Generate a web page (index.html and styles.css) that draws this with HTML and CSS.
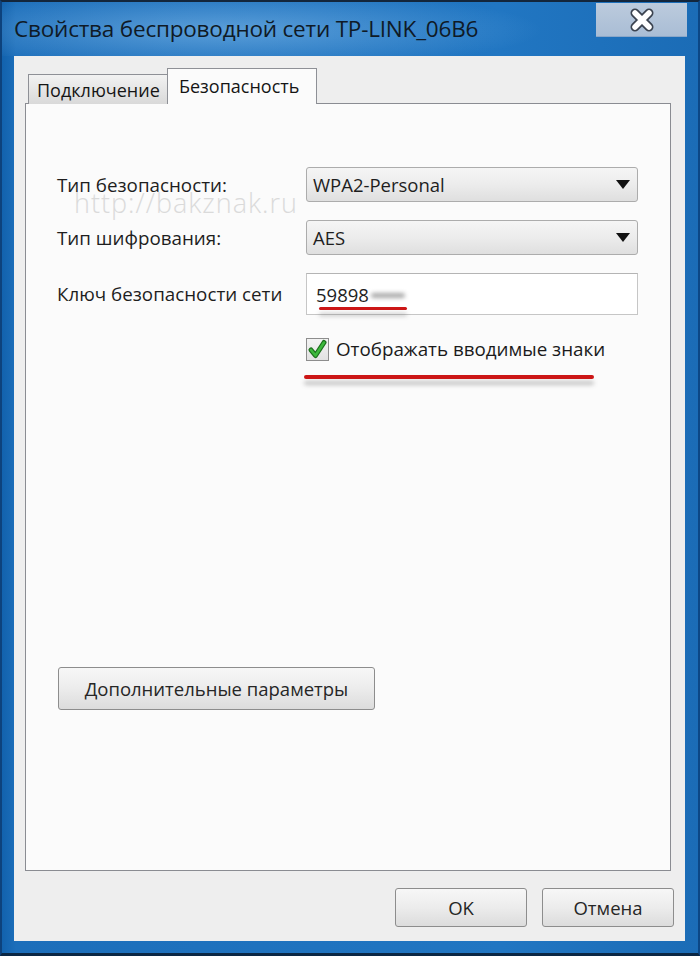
FILE: index.html
```html
<!DOCTYPE html>
<html lang="ru">
<head>
<meta charset="utf-8">
<title>Свойства беспроводной сети TP-LINK_06B6</title>
<link rel="stylesheet" href="styles.css">
</head>
<body>
<div class="window">
  <div class="titlebar">
    <div class="title">Свойства беспроводной сети TP-LINK_06B6</div>
    <div class="close">
      <svg width="28" height="26" viewBox="0 0 28 26">
        <path d="M7 6 L21 20 M21 6 L7 20" stroke="#3b4350" stroke-width="9" stroke-linecap="round" fill="none"/>
        <path d="M7 6 L21 20 M21 6 L7 20" stroke="#ffffff" stroke-width="5.5" stroke-linecap="round" fill="none"/>
      </svg>
    </div>
  </div>
  <div class="client">
    <div class="tabs">
      <div class="tab">Подключение</div>
      <div class="tab active">Безопасность</div>
    </div>
    <div class="panel">
      <div class="watermark">http://bakznak.ru</div>
      <div class="form">
        <div class="row">
          <span class="label">Тип безопасности:</span>
          <div class="select"><span>WPA2-Personal</span><span class="arrow"></span></div>
        </div>
        <div class="row">
          <span class="label">Тип шифрования:</span>
          <div class="select"><span>AES</span><span class="arrow"></span></div>
        </div>
        <div class="row row-key">
          <span class="label">Ключ безопасности сети</span>
          <div class="input"><span>59898</span><span class="smudge"></span><span class="mark mark-key"></span></div>
        </div>
        <div class="row row-check">
          <span class="label"></span>
          <div class="check">
            <span class="box">
              <svg width="21" height="21" viewBox="0 0 21 21">
                <path d="M4 11 L8.5 16.5 L17 3.5" stroke="#1b6e1b" stroke-width="5" stroke-linecap="round" stroke-linejoin="round" fill="none"/>
                <path d="M4 11 L8.5 16.5 L17 3.5" stroke="#3cb83c" stroke-width="2.6" stroke-linecap="round" stroke-linejoin="round" fill="none"/>
              </svg>
            </span>
            <span class="check-label">Отображать вводимые знаки</span>
            <span class="mark mark-check"></span>
          </div>
        </div>
      </div>
      <button class="btn adv">Дополнительные параметры</button>
    </div>
    <div class="footer">
      <button class="btn ok">OK</button>
      <button class="btn cancel">Отмена</button>
    </div>
  </div>
</div>
</body>
</html>
```
FILE: styles.css
```css
* { box-sizing: border-box; }
html, body { margin: 0; padding: 0; }
body {
  width: 700px;
  height: 956px;
  overflow: hidden;
  font-family: "Open Sans", "Noto Sans", sans-serif;
  color: #1e1e1e;
  background: #0e3c6e;
}
.window {
  width: 700px;
  height: 956px;
  display: flex;
  flex-direction: column;
  background: linear-gradient(to right, #1262ad 0px, #1c6eba 14px, #2176c2 500px, #1b6cb6 100%);
  border-top: 2px solid #13263c;
  border-bottom: 3px solid #0b2744;
  border-left: 2px solid #0d427c;
  border-right: 2px solid #0c4785;
  padding: 0 13px 12px 12px;
}
.titlebar {
  height: 54px;
  margin: 0 -13px 0 -12px;
  padding: 0 11px 0 12px;
  display: flex;
  justify-content: space-between;
  align-items: flex-start;
  background: radial-gradient(ellipse 320px 40px at 220px 28px, rgba(140, 195, 240, 0.55), rgba(140, 195, 240, 0) 100%);
}
.title {
  line-height: 54px;
  font-size: 22.5px;
  color: #0f1a26;
  white-space: nowrap;
  letter-spacing: -0.2px;
}
.close {
  margin-top: 1px;
  width: 91px;
  height: 34px;
  background: linear-gradient(#bccbdd, #a9bdd5);
  border-bottom: 1px solid #8aa7c9;
  display: flex;
  align-items: center;
  justify-content: center;
}
.client {
  flex: 1;
  background: #eeeeee;
  padding: 12px 14px 13px 11px;
  display: flex;
  flex-direction: column;
}
.tabs {
  display: flex;
  align-items: flex-end;
  height: 36px;
  margin: 0 0 -1px 3px;
  position: relative;
  z-index: 1;
}
.tab {
  width: 140px;
  height: 30px;
  border: 1px solid #8e9096;
  border-bottom: none;
  background: linear-gradient(#f2f2f2, #d9d9d9);
  font-size: 18px;
  padding-left: 8px;
  display: flex;
  align-items: center;
  color: #151515;
}
.tab.active {
  width: 150px;
  height: 36px;
  margin-left: -1px;
  background: #fbfbfb;
  padding-left: 11px;
  padding-bottom: 2px;
}
.panel {
  flex: none;
  height: 768px;
  border: 1px solid #8a8c92;
  background: #fbfbfb;
  padding: 63px 32px 0 31px;
  position: relative;
}
.watermark {
  position: absolute;
  left: 48px;
  top: 80px;
  font-size: 27px;
  font-weight: 300;
  color: #dadada;
  letter-spacing: 1px;
}
.form {
  position: relative;
  display: flex;
  flex-direction: column;
  gap: 18px;
}
.row {
  display: grid;
  grid-template-columns: 249px 332px;
  align-items: center;
  height: 35px;
}
.row-key { height: 42px; }
.row-check { height: 24px; margin-top: 4px; }
.label {
  font-size: 18.8px;
  color: #1e1e1e;
  white-space: nowrap;
}
.select {
  height: 35px;
  border: 1px solid #acacac;
  border-radius: 3px;
  background: linear-gradient(#f5f5f5 0%, #ececec 50%, #dfdfdf 100%);
  display: flex;
  align-items: center;
  justify-content: space-between;
  padding: 0 7px 0 6px;
  font-size: 18.5px;
}
.arrow {
  width: 0;
  height: 0;
  border-left: 7.5px solid transparent;
  border-right: 7.5px solid transparent;
  border-top: 9px solid #111;
}
.input {
  position: relative;
  height: 42px;
  background: #ffffff;
  border: 1px solid #c6c6c6;
  border-top-color: #b4b4b4;
  display: flex;
  align-items: center;
  padding-left: 9px;
  font-size: 18.5px;
}
.smudge {
  width: 34px;
  height: 5px;
  margin-left: 2px;
  margin-top: 2px;
  background: #a8a8a8;
  border-radius: 3px;
  filter: blur(2px);
}
.mark {
  position: absolute;
  height: 4px;
  background: #cc1616;
  border-radius: 2px;
  box-shadow: 0 6px 4px rgba(90, 90, 90, 0.35);
}
.mark-key {
  left: 12px;
  width: 88px;
  bottom: 4px;
  height: 3px;
}
.check {
  position: relative;
  display: flex;
  align-items: center;
  height: 24px;
}
.box {
  width: 23px;
  height: 23px;
  border: 1px solid #8d8d8d;
  background: linear-gradient(#f3f3f3, #e2e2e2);
  display: flex;
  align-items: center;
  justify-content: center;
}
.check-label {
  margin-left: 7px;
  font-size: 18.8px;
  color: #1a1a1a;
  white-space: nowrap;
}
.mark-check {
  left: -2px;
  top: 38px;
  width: 290px;
}
.btn {
  font-family: "Open Sans", "Noto Sans", sans-serif;
  font-size: 18.5px;
  color: #262626;
  border: 1px solid #8d8d8d;
  border-radius: 3px;
  background: linear-gradient(#f7f7f7 0%, #ececec 50%, #dcdcdc 100%);
  padding: 0;
}
.adv {
  display: block;
  margin: 306px 0 0 1px;
  width: 317px;
  height: 43px;
}
.footer {
  display: flex;
  justify-content: flex-end;
  gap: 15px;
  margin: 17px -3px 0 0;
}
.footer .btn {
  width: 132px;
  height: 39px;
}
```
